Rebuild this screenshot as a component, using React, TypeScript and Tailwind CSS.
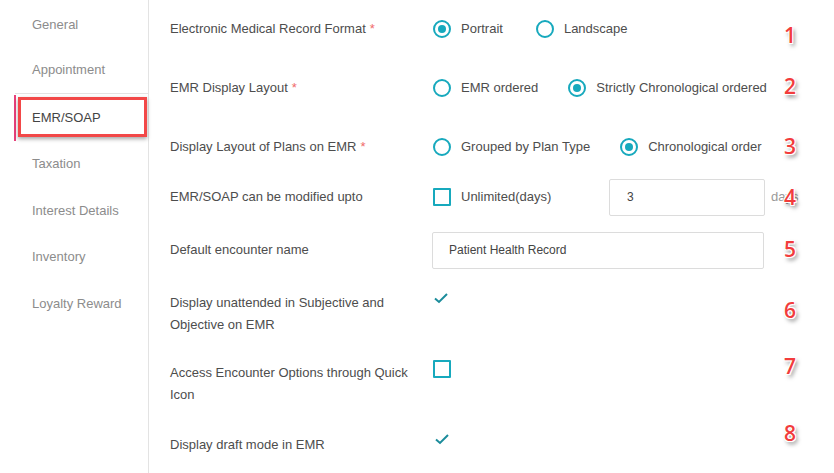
import React from 'react';

const font = { fontFamily: '"Liberation Sans", Arial, sans-serif' };

const menu = ['General', 'Appointment', 'EMR/SOAP', 'Taxation', 'Interest Details', 'Inventory', 'Loyalty Reward'];

function Radio({ checked }: { checked?: boolean }) {
  return (
    <span className="w-[18px] h-[18px] rounded-full border-2 border-[#17a9bd] flex items-center justify-center shrink-0">
      {checked && <span className="w-[8px] h-[8px] rounded-full bg-[#17a9bd]" />}
    </span>
  );
}

function Box() {
  return <span className="w-[18px] h-[18px] border-2 border-[#17a9bd] rounded-[1px] shrink-0 block" />;
}

function Tick() {
  return (
    <svg width="16" height="12" viewBox="0 0 16 12" className="block">
      <path d="M2 6.5 L6 10 L14 2" fill="none" stroke="#1b8c9b" strokeWidth="2" />
    </svg>
  );
}

function Req() {
  return <span className="text-[#f06a6a] ml-1">*</span>;
}

function Option({ checked, label, className = '' }: { checked?: boolean; label: string; className?: string }) {
  return (
    <label className={'flex items-center gap-[10px] ' + className}>
      <Radio checked={checked} />
      <span>{label}</span>
    </label>
  );
}

function Mark({ n, top }: { n: number; top: number }) {
  return (
    <span
      className="absolute left-[780px] w-[20px] text-center text-[21px] text-[#f23c3c] leading-none"
      style={{
        fontFamily: '"Open Sans", sans-serif',
        fontWeight: 600,
        top,
        textShadow:
          '1px 1px 0 #fff, -1px -1px 0 #fff, 1px -1px 0 #fff, -1px 1px 0 #fff, 2px 3px 4px rgba(0,0,0,0.55)',
      }}
    >
      {n}
    </span>
  );
}

function MenuItem({ label, index }: { label: string; index: number }) {
  if (label === 'EMR/SOAP') {
    return (
      <div className="relative h-[46px] flex items-center ml-[14px] pl-[16px] border-l-2 border-[#e8407a] text-[#444] mt-px">
        {label}
        <span className="absolute left-[2px] right-[1px] top-[2px] bottom-[4px] border-[3px] border-[#f24848] shadow-[0_2px_4px_rgba(0,0,0,0.35)]" />
      </div>
    );
  }
  if (index === 1) {
    return (
      <div className="h-[46px] flex items-center ml-[15px] pl-[17px] border-b border-[#e3e3e3] text-[#8c8c8c]">{label}</div>
    );
  }
  return <div className="h-[46.5px] flex items-center pl-[32px] text-[#8c8c8c]">{label}</div>;
}

export default function App() {
  return (
    <div className="relative w-[834px] h-[473px] bg-white flex text-[13px] text-[#4d4d4d] overflow-hidden" style={font}>
      <aside className="w-[149px] shrink-0 border-r border-[#e3e3e3] pt-px">
        {menu.map((m, i) => (
          <MenuItem key={m} label={m} index={i} />
        ))}
      </aside>

      <main className="flex-1 pl-[21px] flex flex-col">
        <div className="h-[58px] flex items-center">
          <div className="w-[263px]">Electronic Medical Record Format<Req /></div>
          <Option checked label="Portrait" />
          <Option label="Landscape" className="ml-[33px]" />
        </div>
        <div className="h-[60px] flex items-center">
          <div className="w-[263px]">EMR Display Layout<Req /></div>
          <Option label="EMR ordered" />
          <Option checked label="Strictly Chronological ordered" className="ml-[30px]" />
        </div>
        <div className="h-[58px] flex items-center">
          <div className="w-[263px]">Display Layout of Plans on EMR<Req /></div>
          <Option label="Grouped by Plan Type" />
          <Option checked label="Chronological order" className="ml-[30px]" />
        </div>
        <div className="h-[42px] flex items-center">
          <div className="w-[263px]">EMR/SOAP can be modified upto</div>
          <label className="flex items-center gap-[10px] w-[176px]">
            <Box />
            <span>Unlimited(days)</span>
          </label>
          <div className="w-[156px] h-[37px] border border-[#dcdcdc] rounded-[2px] flex items-center pl-[17px] text-[12px] text-[#444]">3</div>
          <span className="ml-[6px] text-[#999]">days</span>
        </div>
        <div className="h-[64px] flex items-center">
          <div className="w-[262px]">Default encounter name</div>
          <div className="w-[332px] h-[37px] border border-[#dcdcdc] rounded-[2px] flex items-center pl-[16px] text-[12px] text-[#444]">
            Patient Health Record
          </div>
        </div>
        <div className="h-[68px] flex items-start pt-[10px]">
          <div className="w-[263px] leading-[22px]">
            Display unattended in Subjective and
            <br />
            Objective on EMR
          </div>
          <Tick />
        </div>
        <div className="h-[70px] flex items-start pt-[12px]">
          <div className="w-[263px] leading-[22px]">
            Access Encounter Options through Quick
            <br />
            Icon
          </div>
          <div className="-mt-[2px]"><Box /></div>
        </div>
        <div className="h-[53px] flex items-start pt-[14px]">
          <div className="w-[264px] leading-[22px]">Display draft mode in EMR</div>
          <div className="-mt-[1px]"><Tick /></div>
        </div>
      </main>

      <Mark n={1} top={25} />
      <Mark n={2} top={76} />
      <Mark n={3} top={136} />
      <Mark n={4} top={187} />
      <Mark n={5} top={239} />
      <Mark n={6} top={300} />
      <Mark n={7} top={356} />
      <Mark n={8} top={423} />
    </div>
  );
}
